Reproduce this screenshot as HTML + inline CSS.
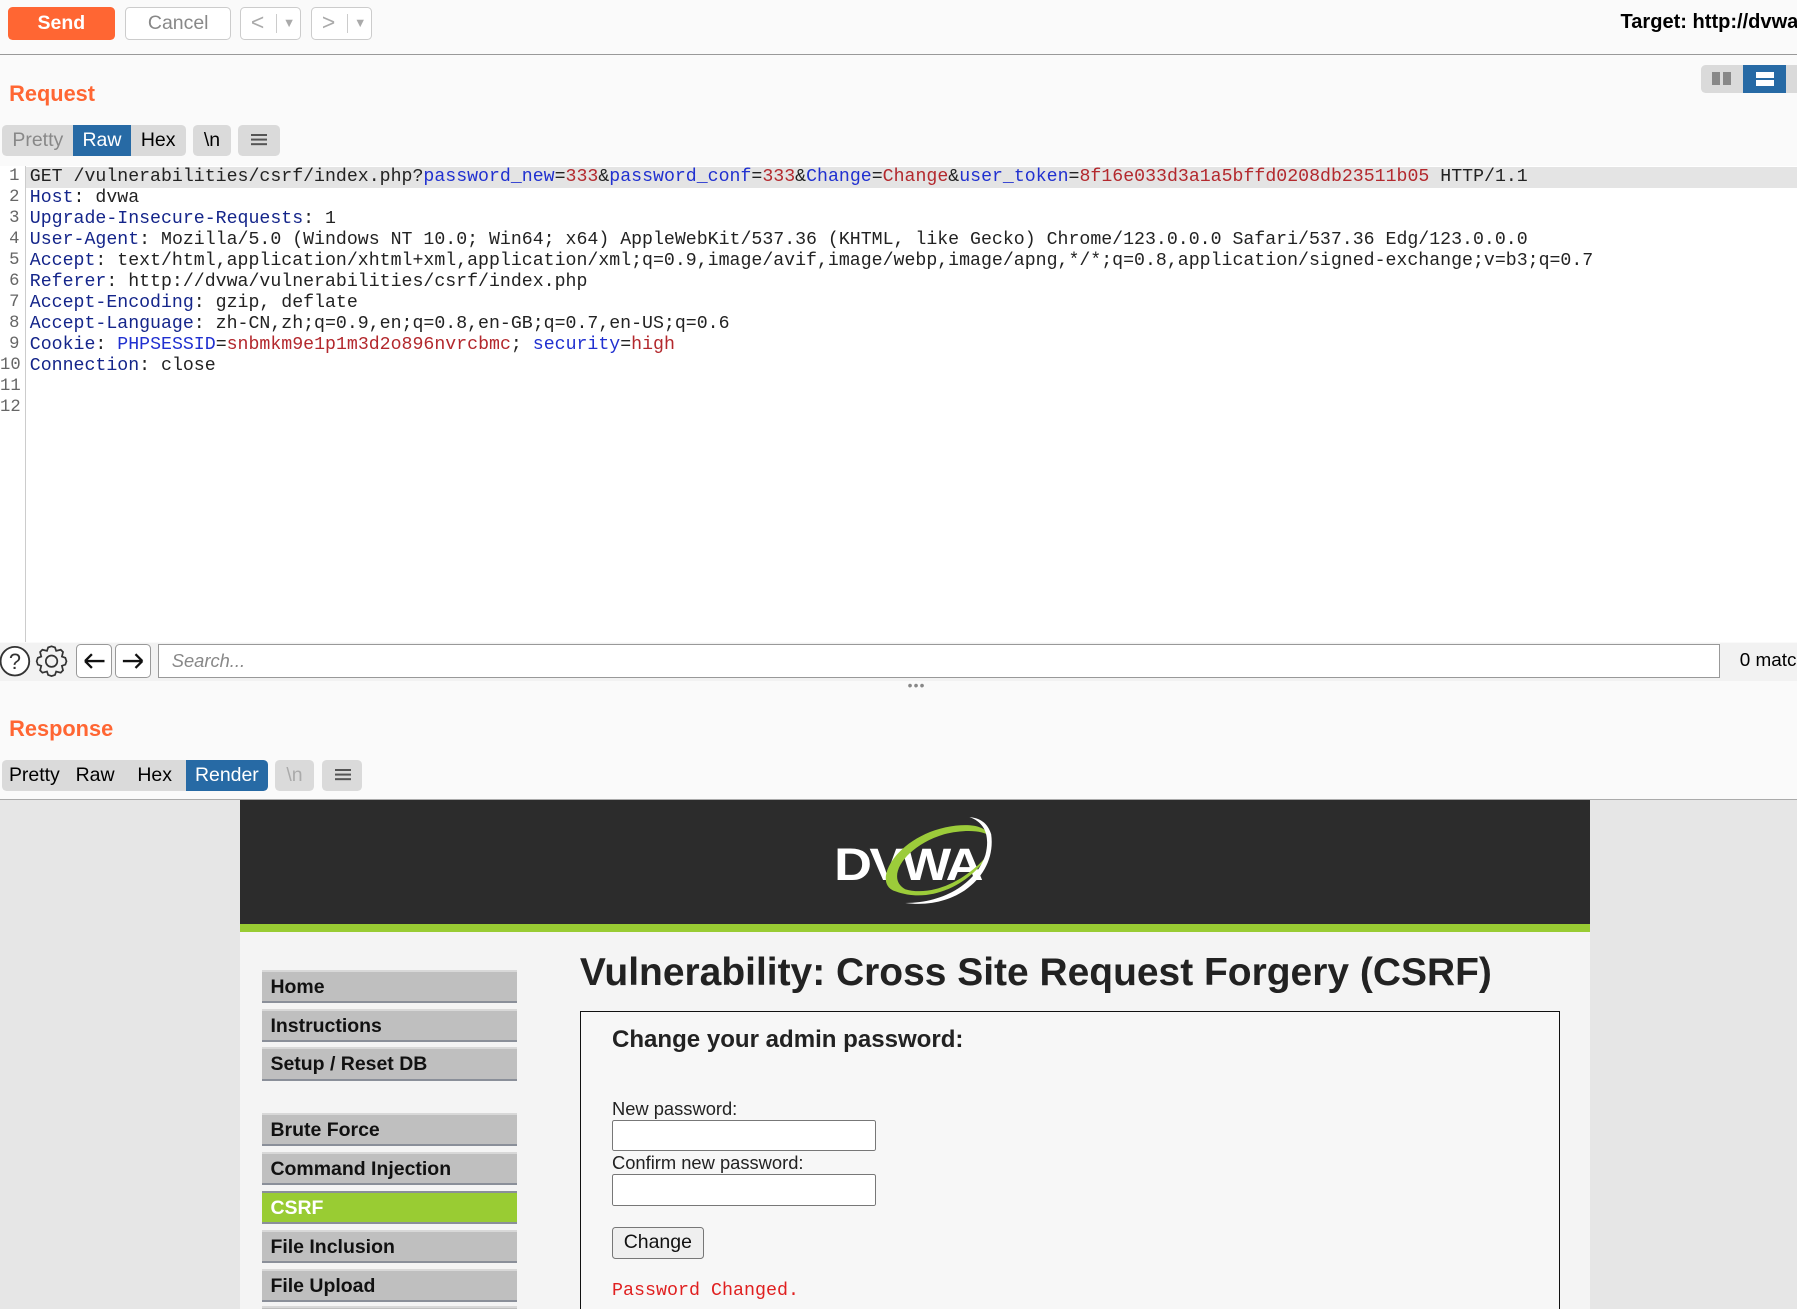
<!DOCTYPE html>
<html><head><meta charset="utf-8"><style>
html,body{margin:0;padding:0;}
html{width:1797px;height:1309px;overflow:hidden;background:#fafafa;}
body{zoom:1.14605;width:1568px;height:1142px;position:relative;overflow:hidden;font-family:"Liberation Sans",sans-serif;background:#fafafa;}
.a{position:absolute;}
.btn{position:absolute;border:1px solid #ccc;border-radius:4px;background:#fff;box-sizing:border-box;}
.tabs{position:absolute;height:27px;display:flex;}
.tab{background:#dadada;color:#000;font-size:17px;line-height:27px;padding:0;text-align:center;}
.tab.on{background:#276aa5;color:#fff;}
.mono{font-family:"Liberation Mono",monospace;}
.code{position:absolute;left:26px;top:146px;font-size:15.9px;line-height:18.3px;white-space:pre;color:#222;font-family:"Liberation Mono",monospace;}
.k{color:#14258a}.p{color:#2030d0}.v{color:#b3282d}
.ln{position:absolute;left:0;width:17px;text-align:right;top:146px;font-size:15px;line-height:18.3px;color:#666;font-family:"Liberation Mono",monospace;}
.menu{position:absolute;left:229px;width:222px;height:29px;background:#bfbfbf;border-top:2px solid #d8d8d8;border-bottom:2px solid #8a8f99;box-sizing:border-box;font-weight:bold;font-size:17px;line-height:27px;padding-left:7px;color:#111;}
</style></head><body>
<!-- top bar -->
<div class="a" style="left:7px;top:6px;width:93px;height:29px;background:#ff6633;border-radius:4px;color:#fff;font-weight:bold;font-size:17px;line-height:29px;text-align:center;">Send</div>
<div class="btn" style="left:109px;top:6px;width:93px;height:29px;color:#888;font-size:17px;line-height:27px;text-align:center;">Cancel</div>
<div class="btn" style="left:209px;top:6px;width:54px;height:29px;color:#aaa;font-size:20px;line-height:26px;"><span style="margin-left:9px">&lt;</span><span style="position:absolute;left:31px;top:5px;height:17px;border-left:1px solid #ccc"></span><span style="position:absolute;left:37px;font-size:11px;top:1px">▼</span></div>
<div class="btn" style="left:271px;top:6px;width:54px;height:29px;color:#aaa;font-size:20px;line-height:26px;"><span style="margin-left:9px">&gt;</span><span style="position:absolute;left:31px;top:5px;height:17px;border-left:1px solid #ccc"></span><span style="position:absolute;left:37px;font-size:11px;top:1px">▼</span></div>
<div class="a" style="left:1414px;top:10px;font-weight:bold;font-size:17.5px;color:#000;white-space:nowrap;">Target: http://dvwa</div>
<div class="a" style="left:0;top:47px;width:1568px;height:1px;background:#999;"></div>

<div class="a" style="left:8px;top:71px;color:#ff6633;font-weight:bold;font-size:19px;">Request</div>
<div class="a" style="left:1484px;top:57px;width:84px;height:24px;background:#dadada;border-radius:4px 0 0 4px;"></div>
<div class="a" style="left:1494px;top:63px;width:7px;height:11px;background:#888"></div><div class="a" style="left:1503px;top:63px;width:7px;height:11px;background:#888"></div>
<div class="a" style="left:1521px;top:57px;width:37px;height:24px;background:#276aa5;"></div>
<div class="a" style="left:1532px;top:63px;width:16px;height:5px;background:#fff"></div><div class="a" style="left:1532px;top:70px;width:16px;height:5px;background:#fff"></div>

<div class="tabs" style="left:2px;top:109px;"><div class="tab" style="color:#888;border-radius:4px 0 0 4px;width:62px">Pretty</div><div class="tab on" style="width:50px">Raw</div><div class="tab" style="border-radius:0 4px 4px 0;width:48px">Hex</div></div>
<div class="a tab" style="left:168px;top:109px;width:34px;padding:0;text-align:center;border-radius:4px;">\n</div>
<div class="a tab" style="left:208px;top:109px;width:36px;padding:0;border-radius:4px;height:27px;"><div class="a" style="left:11px;top:8px;width:14px;height:2px;background:#555;box-shadow:0 4px #555,0 8px #555"></div></div>

<!-- editor -->
<div class="a" style="left:0;top:145px;width:1568px;height:415px;background:#fff;"></div>
<div class="a" style="left:22px;top:145px;width:1px;height:415px;background:#ccc;"></div>
<div class="a" style="left:23px;top:146px;width:1545px;height:18px;background:#e4e4e4;"></div>
<div class="ln">1
2
3
4
5
6
7
8
9
10
11
12</div>
<div class="code">GET /vulnerabilities/csrf/index.php?<span class="p">password_new</span>=<span class="v">333</span>&amp;<span class="p">password_conf</span>=<span class="v">333</span>&amp;<span class="p">Change</span>=<span class="v">Change</span>&amp;<span class="p">user_token</span>=<span class="v">8f16e033d3a1a5bffd0208db23511b05</span> HTTP/1.1
<span class="k">Host</span>: dvwa
<span class="k">Upgrade-Insecure-Requests</span>: 1
<span class="k">User-Agent</span>: Mozilla/5.0 (Windows NT 10.0; Win64; x64) AppleWebKit/537.36 (KHTML, like Gecko) Chrome/123.0.0.0 Safari/537.36 Edg/123.0.0.0
<span class="k">Accept</span>: text/html,application/xhtml+xml,application/xml;q=0.9,image/avif,image/webp,image/apng,*/*;q=0.8,application/signed-exchange;v=b3;q=0.7
<span class="k">Referer</span>: http://dvwa/vulnerabilities/csrf/index.php
<span class="k">Accept-Encoding</span>: gzip, deflate
<span class="k">Accept-Language</span>: zh-CN,zh;q=0.9,en;q=0.8,en-GB;q=0.7,en-US;q=0.6
<span class="k">Cookie</span>: <span class="p">PHPSESSID</span>=<span class="v">snbmkm9e1p1m3d2o896nvrcbmc</span>; <span class="p">security</span>=<span class="v">high</span>
<span class="k">Connection</span>: close</div>

<!-- search bar -->
<div class="a" style="left:0;top:561px;width:1568px;height:33px;background:#f2f2f2;"></div>
<svg class="a" style="left:0;top:562px" width="64" height="30"><circle cx="13" cy="15" r="12.5" fill="#fff" stroke="#333" stroke-width="1.6"/><text x="13" y="22" font-size="19" text-anchor="middle" font-family="Liberation Sans" fill="#333">?</text>
<g transform="translate(45,15)" fill="none" stroke="#333" stroke-width="1.5"><circle r="5"/><path d="M0-13 L3-12 L4-9 L8-10 L10-8 L9-4 L12-3 L13 0 L12 3 L9 4 L10 8 L8 10 L4 9 L3 12 L0 13 L-3 12 L-4 9 L-8 10 L-10 8 L-9 4 L-12 3 L-13 0 L-12-3 L-9-4 L-10-8 L-8-10 L-4-9 L-3-12 Z"/></g></svg>
<div class="btn" style="left:66px;top:562px;width:32px;height:30px;border-color:#999"><svg width="30" height="28"><path d="M7 14H24M7 14L13 8M7 14L13 20" stroke="#111" stroke-width="2" fill="none"/></svg></div>
<div class="btn" style="left:100px;top:562px;width:32px;height:30px;border-color:#999"><svg width="30" height="28"><path d="M6 14H23M23 14L17 8M23 14L17 20" stroke="#111" stroke-width="2" fill="none"/></svg></div>
<div class="a" style="left:138px;top:562px;width:1363px;height:30px;border:1px solid #999;box-sizing:border-box;background:#fff;font-style:italic;color:#888;font-size:16px;line-height:28px;padding-left:11px;">Search...</div>
<div class="a" style="left:1518px;top:567px;font-size:16.5px;color:#000;white-space:nowrap;">0 matc</div>
<div class="a" style="left:792px;top:592px;font-size:12px;color:#888;letter-spacing:1px">•••</div>

<div class="a" style="left:8px;top:625px;color:#ff6633;font-weight:bold;font-size:19px;">Response</div>
<div class="tabs" style="left:2px;top:663px;"><div class="tab" style="border-radius:4px 0 0 4px;width:56px">Pretty</div><div class="tab" style="width:50px">Raw</div><div class="tab" style="width:54px">Hex</div><div class="tab on" style="border-radius:0 4px 4px 0;width:72px">Render</div></div>
<div class="a tab" style="left:240px;top:663px;width:34px;padding:0;text-align:center;border-radius:4px;color:#aaa">\n</div>
<div class="a tab" style="left:281px;top:663px;width:35px;padding:0;border-radius:4px;height:27px;"><div class="a" style="left:11px;top:8px;width:14px;height:2px;background:#555;box-shadow:0 4px #555,0 8px #555"></div></div>

<!-- render -->
<div class="a" style="left:0;top:697px;width:1568px;height:1px;background:#aaa"></div>
<div class="a" style="left:0;top:698px;width:1568px;height:444px;background:#e6e6e6"></div>
<div class="a" style="left:209px;top:698px;width:1178px;height:444px;background:#f4f4f4"></div>
<div class="a" style="left:209px;top:698px;width:1178px;height:108px;background:#2c2c2c"></div>
<div class="a" style="left:209px;top:806px;width:1178px;height:7px;background:#99cc33"></div>
<svg class="a" style="left:720px;top:706px" width="160" height="92">
<text x="8" y="62" font-family="Liberation Sans" font-weight="bold" font-size="40" fill="#fff" letter-spacing="-2" textLength="128" lengthAdjust="spacingAndGlyphs">DVWA</text>
<path d="M62 72 C40 66 60 26 105 16 C125 12 140 14 144 24 C138 18 120 18 104 22 C70 32 52 60 70 70 C90 76 120 66 142 40 C130 62 95 84 62 72Z" fill="#9ccc3a"/>
<path d="M70 82 C115 88 150 58 145 22 C142 12 135 8 126 7 C140 12 144 24 140 40 C132 64 105 82 70 82Z" fill="#fff"/>
</svg>

<div class="menu" style="top:846px">Home</div>
<div class="menu" style="top:880px">Instructions</div>
<div class="menu" style="top:914px">Setup / Reset DB</div>
<div class="menu" style="top:971px">Brute Force</div>
<div class="menu" style="top:1005px">Command Injection</div>
<div class="menu" style="top:1039px;background:#99cc33;color:#fff;border-top-color:#8a8f99;">CSRF</div>
<div class="menu" style="top:1073px">File Inclusion</div>
<div class="menu" style="top:1107px">File Upload</div>
<div class="menu" style="top:1140px">File</div>

<div class="a" style="left:506px;top:830px;font-weight:bold;font-size:34px;color:#222;white-space:nowrap;">Vulnerability: Cross Site Request Forgery (CSRF)</div>
<div class="a" style="left:506px;top:882px;width:855px;height:270px;border:1.5px solid #111;box-sizing:border-box;background:#f7f7f7"></div>
<div class="a" style="left:534px;top:895px;font-weight:bold;font-size:21px;color:#222;">Change your admin password:</div>
<div class="a" style="left:534px;top:958px;font-size:16px;color:#222;">New password:</div>
<div class="a" style="left:534px;top:977px;width:230px;height:27px;border:1px solid #777;border-radius:2px;background:#fff;box-sizing:border-box"></div>
<div class="a" style="left:534px;top:1005px;font-size:16px;color:#222;">Confirm new password:</div>
<div class="a" style="left:534px;top:1024px;width:230px;height:28px;border:1px solid #777;border-radius:2px;background:#fff;box-sizing:border-box"></div>
<div class="a" style="left:534px;top:1071px;width:80px;height:28px;border:1px solid #777;border-radius:3px;background:#efefef;box-sizing:border-box;font-size:17px;text-align:center;line-height:26px;color:#111">Change</div>
<div class="a mono" style="left:534px;top:1117px;font-size:16px;color:#e02020;">Password Changed.</div>
</body></html>
